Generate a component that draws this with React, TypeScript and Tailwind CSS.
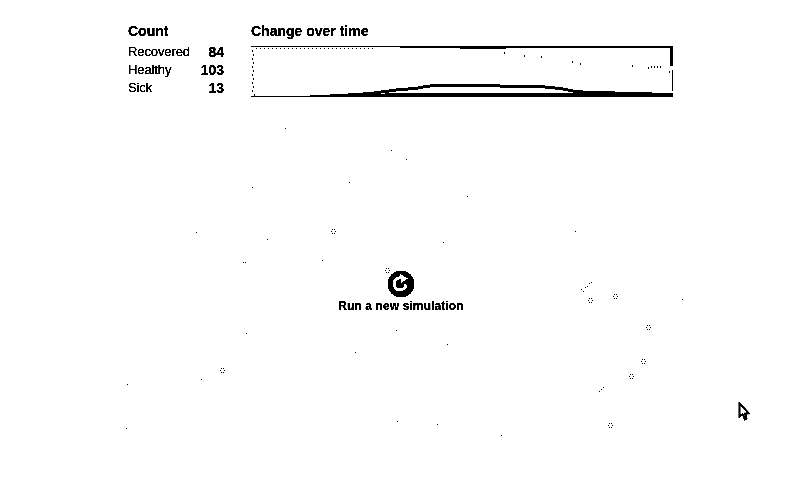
const rows = [
  { label: "Recovered", value: 84 },
  { label: "Healthy", value: 103 },
  { label: "Sick", value: 13 },
];

// lone pixels in the simulation field
const specks = [
  [285, 128], [391, 150], [406, 159], [349, 182], [252, 187], [467, 196], [196, 232], [267, 239],
  [443, 242], [575, 231], [243, 262], [245, 262], [322, 260], [682, 299], [246, 333], [396, 330],
  [447, 344], [355, 352], [201, 379], [127, 384], [397, 421], [437, 424], [126, 428], [501, 435],
  [581, 289], [583, 291], [585, 287], [587, 286], [589, 283], [591, 282], [599, 391], [601, 389], [603, 387],
];

// sick people are drawn as small dotted rings
const rings = [
  [333, 231], [387, 270], [590, 300], [615, 296], [648, 327], [643, 361], [222, 370], [631, 376], [610, 425],
];

const ringDots = [[-1, -2], [1, -2], [-2, 0], [2, 0], [-1, 2], [1, 2]];

const chartDots = [
  [252, 50], [253, 54], [252, 58], [253, 62], [252, 66], [253, 70], [252, 74], [253, 78], [252, 82], [253, 86], [252, 90], [254, 94],
  [504, 52], [524, 55], [541, 56], [572, 61], [580, 63], [632, 65], [648, 67], [651, 66], [654, 66], [657, 66], [660, 66], [669, 71],
];

function Field() {
  return (
    <svg className="absolute inset-0" width={800} height={502} shapeRendering="crispEdges">
      {specks.map(([x, y], i) => (
        <rect key={i} x={x} y={y} width={1} height={1} fill="#000" />
      ))}
      {rings.map(([x, y], i) =>
        ringDots.map(([dx, dy], j) => <rect key={`${i}-${j}`} x={x + dx} y={y + dy} width={1} height={1} fill="#000" />)
      )}
    </svg>
  );
}

function Chart() {
  // viewBox uses page coordinates so the traces can be read straight off the picture
  return (
    <svg width={423} height={52} viewBox="251 46 423 52" shapeRendering="crispEdges" className="block">
      <rect x={251} y={46} width={149} height={1} fill="#000" />
      <rect x={400} y={46} width={273} height={2} fill="#000" />
      <rect x={460} y={48} width={46} height={1} fill="#000" />
      <rect x={670} y={46} width={3} height={20} fill="#000" />
      <rect x={672} y={70} width={1} height={21} fill="#000" />
      <rect x={251} y={96} width={422} height={1} fill="#000" />
      <path d="M300 96L340 95L400 93H673V97H300Z" fill="#000" />
      <path
        d="M300 96L340 94L370 92L400 88L415 87L425 85L435 84H490L510 85L540 85L560 87L575 90L590 91L640 92L664 93V94H590L575 93L560 90L540 88L510 88L490 87H435L425 88L415 90L400 91L370 95L340 96Z"
        fill="#000"
      />
      {chartDots.map(([x, y], i) => (
        <rect key={i} x={x} y={y} width={1} height={2} fill="#000" />
      ))}
      {Array.from({ length: 30 }, (_, i) => (
        <rect key={i} x={256 + i * 4} y={48} width={1} height={1} fill="#000" />
      ))}
    </svg>
  );
}

function RestartIcon() {
  return (
    <svg width={30} height={30} viewBox="0 0 30 30" shapeRendering="crispEdges">
      <circle cx={15} cy={15} r={13.5} fill="#000" />
      <path d="M20 15.500A6 6 0 1 1 15 9" fill="none" stroke="#fff" strokeWidth={3} />
      <path d="M14 5L22 9.500L15 14Z" fill="#fff" />
    </svg>
  );
}

export default function App() {
  return (
    <div className="relative w-[800px] h-[502px] overflow-hidden bg-white text-black font-['Liberation_Sans',Arial,sans-serif] brightness-[0.7] grayscale contrast-[8]">
      <Field />
      <div className="relative flex pl-[128px] pt-[23px]">
        <div className="w-[96px] mr-[27px]">
          <h2 className="text-[14px] leading-[17px] font-bold">Count</h2>
          <div className="mt-[3px]">
            {rows.map((row) => (
              <div key={row.label} className="flex justify-between h-[18px] text-[13px] leading-[18px]">
                <span className="tracking-[-0.1px]">{row.label}</span>
                <span className="font-bold text-[14px]">{row.value}</span>
              </div>
            ))}
          </div>
        </div>
        <div>
          <h2 className="text-[14px] leading-[17px] font-bold">Change over time</h2>
          <div className="mt-[6px]">
            <Chart />
          </div>
        </div>
      </div>
      <div className="absolute top-[269px] left-[1px] w-full flex flex-col items-center">
        <RestartIcon />
        <span className="text-[12px] leading-[15px] font-bold tracking-[0.1px]">Run a new simulation</span>
      </div>
      <svg className="absolute left-[738px] top-[402px]" width={13} height={20} viewBox="0 0 13 20">
        <path d="M1.500 1.500V14.500L4.500 12L7 17.500L8.500 16.500L7 11.500H11Z" fill="#fff" stroke="#000" strokeWidth={1.600} />
      </svg>
    </div>
  );
}
